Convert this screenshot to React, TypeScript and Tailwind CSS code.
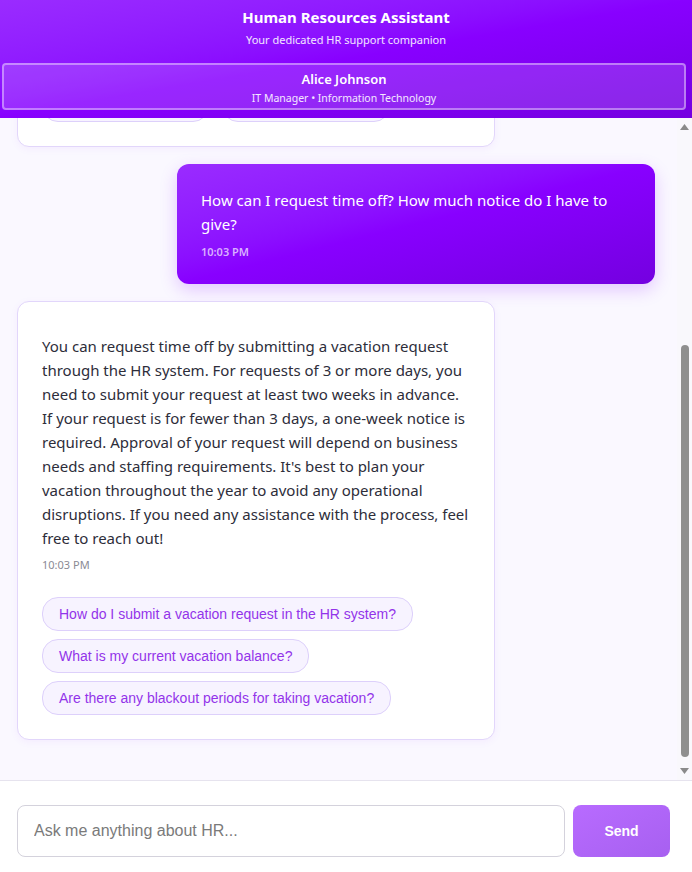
import { useEffect, useRef } from 'react';

const uiFont = { fontFamily: '"Segoe UI", "Noto Sans", "Open Sans", sans-serif' };
const arial = { fontFamily: '"Liberation Sans", Arial, sans-serif' };

function Chips({ items }: { items: string[] }) {
  return (
    <div className="mt-6 flex flex-wrap gap-x-[13px] gap-y-2">
      {items.map((q) => (
        <button
          key={q}
          style={arial}
          className="rounded-2xl border border-[#ddd0fb] bg-[#f7f3ff] px-4 py-2 text-left text-[14px] leading-4 text-[#9333ea]"
        >
          {q}
        </button>
      ))}
    </div>
  );
}

function BotMessage({ text, time, suggestions }: { text: string; time: string; suggestions: string[] }) {
  return (
    <div className="w-[478px] self-start rounded-xl border border-[#e2d6fb] bg-white px-6 pt-8 pb-6 shadow-[0_2px_8px_rgba(136,0,255,0.05)]">
      <p className="text-[15px] leading-6 text-[#2d2d3a]">{text}</p>
      <div className="mt-[7px] text-[11px] leading-4 text-[#8a8a94]">{time}</div>
      <Chips items={suggestions} />
    </div>
  );
}

function UserMessage({ text, time }: { text: string; time: string }) {
  return (
    <div className="w-[478px] self-end rounded-xl bg-linear-to-br from-[#9a2bff] via-[#8800ff] to-[#7400e0] px-6 pt-6 pb-6 shadow-[0_6px_18px_rgba(136,0,255,0.2)]">
      <p className="text-[15px] leading-6 text-white">{text}</p>
      <div className="mt-2 text-[11px] leading-4 font-semibold text-[#d9b0ff]">{time}</div>
    </div>
  );
}

function Arrow({ up }: { up?: boolean }) {
  return (
    <div className="flex h-[18px] items-center justify-center">
      <svg width="9" height="6" viewBox="0 0 9 6">
        <path d={up ? 'M0 6 L4.5 0 L9 6 Z' : 'M0 0 L4.5 6 L9 0 Z'} fill="#8a8a8a" />
      </svg>
    </div>
  );
}

export default function App() {
  const scrollRef = useRef<HTMLDivElement>(null);

  useEffect(() => {
    const el = scrollRef.current;
    if (el) el.scrollTop = el.scrollHeight;
  }, []);

  return (
    <div style={uiFont} className="flex h-[872px] flex-col overflow-hidden bg-white">
      {/* header */}
      <div className="h-[118px] shrink-0 bg-linear-to-br from-[#9a2bff] via-[#8800ff] to-[#7400e0] text-center text-white">
        <h1 className="pt-[7px] text-[15px] leading-5 font-bold">Human Resources Assistant</h1>
        <p className="mt-[5px] text-[11px] leading-4 text-white/90">Your dedicated HR support companion</p>
        <div className="mt-[15px] ml-[2px] w-[684px] rounded border-2 border-white/40 bg-white/15 pt-[6px] pb-[3px]">
          <div className="text-[13px] leading-4 font-semibold">Alice Johnson</div>
          <div className="mt-1 text-[10.5px] leading-[14px] text-white/90">IT Manager • Information Technology</div>
        </div>
      </div>

      {/* messages + scrollbar */}
      <div className="flex min-h-0 flex-1 bg-[#faf8ff]">
        <div ref={scrollRef} className="min-w-0 flex-1 overflow-hidden">
          <div className="flex flex-col gap-[17px] pt-[17px] pr-[22px] pb-[40px] pl-[17px]">
            <BotMessage
              text="Hello Alice! I'm your Human Resources Assistant. I can help you with questions about company policies, benefits, payroll, time off, onboarding, training opportunities and anything else related to your employment. Just type your question below or pick one of the suggested topics to get started. Everything you ask stays between us, so feel free to ask whatever is on your mind."
              time="10:02 PM"
              suggestions={['What benefits do I have?', 'How is my salary paid?', 'Remote work policies', 'Training opportunities']}
            />
            <UserMessage text="How can I request time off? How much notice do I have to give?" time="10:03 PM" />
            <BotMessage
              text="You can request time off by submitting a vacation request through the HR system. For requests of 3 or more days, you need to submit your request at least two weeks in advance. If your request is for fewer than 3 days, a one-week notice is required. Approval of your request will depend on business needs and staffing requirements. It's best to plan your vacation throughout the year to avoid any operational disruptions. If you need any assistance with the process, feel free to reach out!"
              time="10:03 PM"
              suggestions={[
                'How do I submit a vacation request in the HR system?',
                'What is my current vacation balance?',
                'Are there any blackout periods for taking vacation?',
              ]}
            />
          </div>
        </div>
        <div className="flex w-[15px] shrink-0 flex-col bg-[#f9f8fc]">
          <Arrow up />
          <div className="flex flex-1 flex-col items-center pt-[209px] pb-[5px]">
            <div className="w-[8px] flex-1 rounded-full bg-[#8f8f8f]" />
          </div>
          <Arrow />
        </div>
      </div>

      {/* input */}
      <div className="flex shrink-0 gap-2 border-t border-[#e6e3ee] bg-white pt-6 pr-[22px] pb-[15px] pl-[17px]">
        <input
          style={arial}
          placeholder="Ask me anything about HR..."
          className="h-[52px] flex-1 rounded-lg border border-[#d4d2dc] px-4 text-[16px] text-[#333] outline-none placeholder:text-[#7a7a7a]"
        />
        <button
          style={arial}
          className="h-[52px] w-[97px] rounded-lg bg-linear-to-br from-[#b86bff] to-[#a760f0] text-[14px] font-bold text-white"
        >
          Send
        </button>
      </div>
    </div>
  );
}
